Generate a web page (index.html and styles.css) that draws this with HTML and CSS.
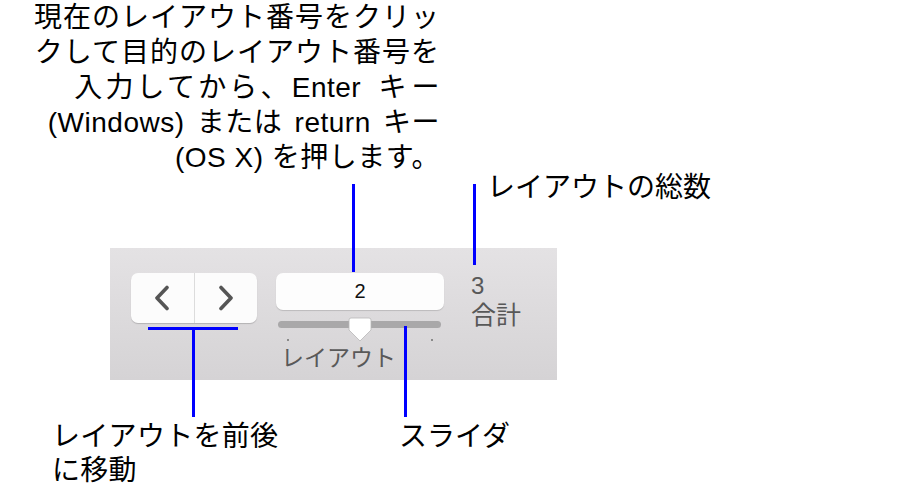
FILE: index.html
```html
<!DOCTYPE html>
<html lang="ja">
<head>
<meta charset="utf-8">
<title>レイアウト ナビゲーション</title>
<link rel="stylesheet" href="styles.css">
</head>
<body>
<div class="canvas">
  <p class="callout callout-top"><span class="ln ln-cjk">現在のレイアウト番号をクリッ</span><span class="ln ln-cjk">クして目的のレイアウト番号を</span><span class="ln ln-gap"><span class="jp-loose">入力してから、</span>Enter <span class="key-spread">キ</span>ー</span><span class="ln ln-spaced">(Windows) または return キー</span><span class="ln">(OS X) を押します。</span></p>
  <p class="callout callout-total">レイアウトの総数</p>
  <p class="callout callout-nav">レイアウトを前後<br>に移動</p>
  <p class="callout callout-slider">スライダ</p>

  <div class="panel">
    <div class="nav-group">
      <button class="nav-btn" type="button" aria-label="前へ">
        <svg width="18" height="26" viewBox="0 0 18 26"><polyline points="14,2.5 4,13 14,23.5" fill="none" stroke="#555555" stroke-width="3.6" stroke-linecap="round" stroke-linejoin="round"/></svg>
      </button>
      <button class="nav-btn nav-btn-right" type="button" aria-label="次へ">
        <svg width="18" height="26" viewBox="0 0 18 26"><polyline points="4,2.5 14,13 4,23.5" fill="none" stroke="#555555" stroke-width="3.6" stroke-linecap="round" stroke-linejoin="round"/></svg>
      </button>
    </div>
    <div class="layout-col">
      <div class="page-field">2</div>
      <div class="slider">
        <div class="track"></div>
        <svg class="thumb" width="24" height="25" viewBox="0 0 24 25"><path d="M3 1 H21 Q23 1 23 3 V13 L12 24 L1 13 V3 Q1 1 3 1 Z" fill="#ffffff" stroke="#b8b8b8" stroke-width="0.8"/></svg>
      </div>
      <div class="ticks"><span class="tick"></span><span class="tick"></span></div>
      <div class="slider-label">レイアウト</div>
    </div>
    <div class="total">
      <div class="total-num">3</div>
      <div class="total-label">合計</div>
    </div>
  </div>

  <div class="line line-field"></div>
  <div class="line line-total"></div>
  <div class="line line-nav-h"></div>
  <div class="line line-nav-v"></div>
  <div class="line line-slider"></div>
</div>
</body>
</html>
```
FILE: styles.css
```css
html, body {
  margin: 0;
  padding: 0;
  background: #ffffff;
}

.canvas {
  position: relative;
  width: 920px;
  height: 501px;
  overflow: hidden;
  font-family: "Liberation Sans", "Noto Sans CJK JP", sans-serif;
  color: #000;
}

.callout {
  position: absolute;
  margin: 0;
  font-size: 28px;
  line-height: 35px;
  white-space: nowrap;
}

.callout-top {
  left: 0;
  top: 0;
  width: 440px;
  text-align: right;
  letter-spacing: 0.5px;
}

.ln {
  display: block;
}

.ln-cjk {
  letter-spacing: 1px;
}

.ln-gap {
  word-spacing: 9px;
}

.jp-loose {
  letter-spacing: 3.2px;
}

.key-spread {
  letter-spacing: 5px;
}

.ln-spaced {
  word-spacing: 4px;
}

.callout-total {
  left: 487px;
  top: 170px;
}

.callout-nav {
  left: 52px;
  top: 420px;
  line-height: 34px;
  letter-spacing: 0.3px;
}

.callout-slider {
  left: 399px;
  top: 420px;
  line-height: 34px;
}

/* panel */
.panel {
  margin: 248px 0 0 110px;
  width: 447px;
  height: 132px;
  box-sizing: border-box;
  padding: 25px 0 0 21px;
  display: flex;
  align-items: flex-start;
  background: linear-gradient(#e4e2e4, #d5d3d5);
}

.nav-group {
  display: flex;
  width: 126px;
  height: 50px;
  margin-right: 19px;
  background: #fcfcfc;
  border-radius: 7px;
  box-shadow: 0 1px 1px rgba(0, 0, 0, 0.18);
}

.nav-btn {
  flex: 1;
  margin: 0;
  padding: 0;
  border: 0;
  background: transparent;
  display: flex;
  align-items: center;
  justify-content: center;
}

.nav-btn-right {
  border-left: 1px solid #dcdcdc;
}

.layout-col {
  width: 168px;
  margin-right: 27px;
  display: flex;
  flex-direction: column;
}

.page-field {
  height: 37px;
  background: #fdfdfd;
  border-radius: 7px;
  box-shadow: 0 1px 1px rgba(0, 0, 0, 0.15);
  display: flex;
  align-items: center;
  justify-content: center;
  font-size: 20px;
  color: #111;
}

.slider {
  position: relative;
  margin-top: 11px;
  height: 7px;
  padding: 0 3px 0 2px;
}

.track {
  height: 7px;
  border-radius: 4px;
  background: #a9a8a9;
}

.thumb {
  position: absolute;
  left: 72px;
  top: -4px;
}

.ticks {
  display: flex;
  justify-content: space-between;
  padding: 0 11px 0 11px;
  margin-top: 11px;
  height: 3px;
}

.tick {
  width: 2px;
  height: 2px;
  background: #8a8a8a;
}

.slider-label {
  margin-top: 2px;
  padding-left: 5px;
  font-size: 23px;
  line-height: 28px;
  color: #595959;
}

.total {
  display: flex;
  flex-direction: column;
  color: #585858;
}

.total-num {
  font-size: 24px;
  line-height: 26px;
  margin-top: 0;
}

.total-label {
  font-size: 25px;
  line-height: 30px;
  margin-top: 1px;
}

/* annotation leader lines */
.line {
  position: absolute;
  background: #0000ff;
}

.line-field {
  left: 352px;
  top: 184px;
  width: 3px;
  height: 88px;
}

.line-total {
  left: 473px;
  top: 184px;
  width: 3px;
  height: 81px;
}

.line-nav-h {
  left: 148px;
  top: 327px;
  width: 90px;
  height: 3px;
}

.line-nav-v {
  left: 192px;
  top: 327px;
  width: 3px;
  height: 90px;
}

.line-slider {
  left: 404px;
  top: 326px;
  width: 3px;
  height: 91px;
}
```
